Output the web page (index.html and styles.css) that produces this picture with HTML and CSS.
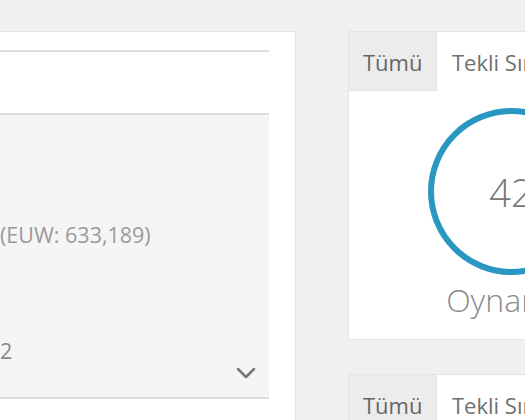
FILE: index.html
```html
<!DOCTYPE html>
<html lang="tr">

<head>
    <meta charset="UTF-8">
    <meta name="viewport" content="width=device-width, initial-scale=1.0">
    <title>Sihirdar Profili</title>
    <link rel="stylesheet" href="styles.css">
</head>

<body>
    <div class="page">
        <div class="profile-card">
            <div class="summary"></div>
            <div class="rank">
                <p class="rank-line">(EUW: 633,189)</p>
                <p class="rank-sub">2</p>
                <div class="rank-toggle">
                    <svg width="20" height="12" viewBox="0 0 20 12">
                        <polyline points="2,2 10,10 18,2" fill="none" stroke="#777" stroke-width="2.5"
                            stroke-linecap="round" stroke-linejoin="round" />
                    </svg>
                </div>
            </div>
        </div>

        <div class="stats">
            <div class="stat-card">
                <div class="tabs">
                    <div class="tab tab-all">Tümü</div>
                    <div class="tab">Tekli Sıralı</div>
                </div>
                <div class="ring-wrap">
                    <div class="ring">42</div>
                </div>
                <div class="ring-label">Oynanan</div>
            </div>

            <div class="stat-card">
                <div class="tabs">
                    <div class="tab tab-all">Tümü</div>
                    <div class="tab">Tekli Sıralı</div>
                </div>
                <div class="ring-wrap">
                    <div class="ring">24</div>
                </div>
                <div class="ring-label">Galibiyet</div>
            </div>
        </div>
    </div>
</body>

</html>
```

FILE: styles.css
```css
body {
    margin: 0;
    background-color: #f0f0f0;
    font-family: "Open Sans", Arial, sans-serif;
    overflow: hidden;
}

.page {
    display: flex;
    align-items: flex-start;
    gap: 52px;
    margin-left: -60px;
    padding-top: 31px;
}

/* left column: profile summary */
.profile-card {
    flex-shrink: 0;
    width: 356px;
    height: 420px;
    box-sizing: border-box;
    background-color: #fff;
    border: 1px solid #e4e4e4;
    padding: 18px 26px 0 26px;
}

.summary {
    height: 61px;
    border-top: 2px solid #dedede;
}

.rank {
    height: 282px;
    background-color: #f5f5f5;
    border-top: 2px solid #dedede;
    border-bottom: 2px solid #dedede;
    padding-left: 33px;
    display: flex;
    flex-direction: column;
}

.rank-line,
.rank-sub {
    margin: 0;
    font-size: 21.5px;
    line-height: 28px;
    color: #9a9a9a;
}

.rank-line {
    margin-top: 106px;
}

.rank-sub {
    margin-top: 88px;
    color: #8a8a8a;
}

.rank-toggle {
    display: flex;
    justify-content: flex-end;
    margin-top: 2px;
    margin-right: 13px;
}

/* right column: stat cards */
.stats {
    flex-shrink: 0;
    width: 326px;
    display: flex;
    flex-direction: column;
    gap: 34px;
}

.stat-card {
    background-color: #fff;
    border: 1px solid #e4e4e4;
}

.tabs {
    display: flex;
}

.tab {
    height: 58px;
    box-sizing: border-box;
    padding: 2px 15px 0 15px;
    font-size: 22px;
    line-height: 56px;
    color: #707070;
    white-space: nowrap;
}

.tab-all {
    width: 88px;
    height: 59px;
    padding-left: 14px;
    background-color: #ececec;
    border-right: 1px solid #e2e2e2;
    border-bottom: 1px solid #e2e2e2;
    color: #666;
}

.ring-wrap {
    display: flex;
    justify-content: center;
    padding-top: 17px;
}

.ring {
    width: 167px;
    height: 167px;
    box-sizing: border-box;
    border: 6px solid #2898c2;
    border-radius: 50%;
    display: flex;
    align-items: center;
    justify-content: center;
    font-size: 38px;
    font-weight: 300;
    color: #777;
}

.ring-label {
    margin-top: 5px;
    padding-bottom: 19px;
    text-align: center;
    font-size: 32px;
    font-weight: 300;
    line-height: 40px;
    color: #8c8c8c;
}
```
